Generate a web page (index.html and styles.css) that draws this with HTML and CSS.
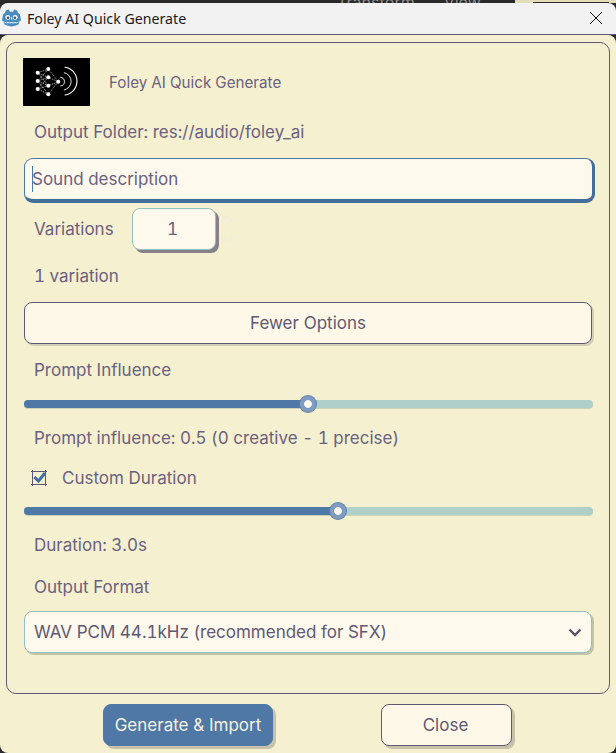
FILE: index.html
```html
<!DOCTYPE html>
<html lang="en">
<head>
<meta charset="utf-8">
<title>Foley AI Quick Generate</title>
<link rel="stylesheet" href="styles.css">
</head>
<body>
<div class="editor-strip">
  <span class="strip-menu">Transform</span><span class="strip-menu">View</span>
  <span class="strip-corner"><span class="strip-line"></span></span>
</div>
<div class="window">
  <header class="titlebar">
    <svg class="app-icon" viewBox="0 0 18 18" width="19" height="19" aria-hidden="true">
      <path d="M3.500 1.500 L6.500 0.500 L7.500 2.500 H10.500 L11.500 0.500 L14.500 1.500 L15 3.500 L17 5 L18 11 L16 12 V14.500 Q9 18.500 2 14.500 V12 L0 11 L1 5 L3 3.500 Z" fill="#478cbf"/>
      <circle cx="5.500" cy="8" r="2.300" fill="#fff"/><circle cx="12.500" cy="8" r="2.300" fill="#fff"/>
      <circle cx="5.800" cy="8.300" r="1.200" fill="#3f4a55"/><circle cx="12.200" cy="8.300" r="1.200" fill="#3f4a55"/>
      <rect x="8.500" y="8" width="1" height="2" fill="#fff"/>
      <path d="M2.500 12.500 Q4.500 13.500 6 12.800 Q7.500 13.800 9 12.800 Q10.500 13.800 12 12.800 Q13.500 13.500 15.500 12.500" stroke="#fff" stroke-width="0.900" fill="none"/>
    </svg>
    <span class="title-text">Foley AI Quick Generate</span>
    <svg class="close-x" viewBox="0 0 12 12" width="12" height="12" aria-hidden="true"><path d="M0 0 L12 12 M12 0 L0 12" stroke="#111" stroke-width="1"/></svg>
  </header>
  <div class="dialog">
    <main class="panel">
      <div class="logo-row">
        <div class="logo">
          <svg viewBox="0 0 67 48" width="67" height="48" aria-hidden="true">
            <g stroke="#fff" stroke-width="0.7" stroke-dasharray="1 1" fill="none">
              <path d="M14.700 14.700 L25.300 11 M14.700 14.700 L25.300 19.300 M14.700 14.700 L25.300 27.700 M14.700 23 L25.300 11 M14.700 23 L25.300 19.300 M14.700 23 L25.300 27.700 M14.700 23 L25.300 36.300 M14.700 31 L25.300 19.300 M14.700 31 L25.300 27.700 M14.700 31 L25.300 36.300 M25.300 11 L35.300 23.700 M25.300 19.300 L35.300 23.700 M25.300 27.700 L35.300 23.700 M25.300 36.300 L35.300 23.700"/>
            </g>
            <g fill="#fff">
              <circle cx="25.300" cy="11" r="2"/><circle cx="14.700" cy="14.700" r="2"/><circle cx="14.700" cy="23" r="2"/><circle cx="14.700" cy="31" r="2"/>
              <circle cx="25.300" cy="19.300" r="2"/><circle cx="25.300" cy="27.700" r="2"/><circle cx="25.300" cy="36.300" r="2"/><circle cx="35.300" cy="23.700" r="2"/>
            </g>
            <g stroke="#fff" fill="none" stroke-linecap="round">
              <path d="M37.700 19.300 A4.400 4.400 0 0 1 37.700 28" stroke-width="0.9"/>
              <path d="M41.300 14.700 A8.900 8.900 0 0 1 41.300 32" stroke-width="0.9"/>
              <path d="M42 9.300 A14 14 0 0 1 42 37" stroke-width="1.100"/>
            </g>
          </svg>
        </div>
        <span class="logo-title">Foley AI Quick Generate</span>
      </div>
      <div class="label folder-label">Output Folder: res://audio/foley_ai</div>
      <div class="field sound-field"><span class="caret"></span><span class="placeholder">Sound description</span></div>
      <div class="variations-row">
        <span class="label-inline">Variations</span>
        <div class="spin-box">1</div>
        <svg class="spin-arrows" viewBox="0 0 14 36" width="14" height="36" aria-hidden="true">
          <path d="M1.500 10.500 L7 5.500 L12.500 10.500" stroke="#eeeedb" stroke-width="2" fill="none"/>
          <path d="M1.500 25.500 L7 30.500 L12.500 25.500" stroke="#eeeedb" stroke-width="2" fill="none"/>
        </svg>
      </div>
      <div class="label variation-count">1 variation</div>
      <button class="btn options-btn" type="button">Fewer Options</button>
      <div class="label influence-label">Prompt Influence</div>
      <div class="slider first-slider">
        <div class="track"><div class="fill fill-half"></div></div>
        <span class="thumb thumb-half"></span>
      </div>
      <div class="label influence-value">Prompt influence: 0.5 (0 creative - 1 precise)</div>
      <div class="check-row">
        <svg class="checkbox" viewBox="0 0 16 16" width="16" height="16" aria-hidden="true">
          <path d="M0 1.500 H16 M1.500 0 V16 M0 14.500 H16 M14.500 0 V16" fill="none" stroke="#5f5773" stroke-width="1"/>
          <path d="M3.300 7 L7.500 11 L14 3" stroke="#3f6f9f" stroke-width="3" fill="none"/>
        </svg>
        <span class="check-label">Custom Duration</span>
      </div>
      <div class="slider second-slider">
        <div class="track"><div class="fill fill-duration"></div></div>
        <span class="thumb thumb-duration"></span>
      </div>
      <div class="label duration-value">Duration: 3.0s</div>
      <div class="label format-label">Output Format</div>
      <div class="select-box">
        <span>WAV PCM 44.1kHz (recommended for SFX)</span>
        <svg class="chevron" viewBox="0 0 14 9" width="14" height="9" aria-hidden="true"><path d="M1.500 1.500 L7 7 L12.500 1.500" stroke="#5a5068" stroke-width="2.400" fill="none"/></svg>
      </div>
    </main>
    <footer class="actions">
      <button class="btn primary" type="button">Generate &amp; Import</button>
      <button class="btn close-btn" type="button">Close</button>
    </footer>
  </div>
</div>
</body>
</html>
```
FILE: styles.css
```css
* { box-sizing: border-box; }
html, body { margin: 0; height: 100%; }
body {
  width: 616px;
  height: 753px;
  overflow: hidden;
  background: #2a2a2a;
  font-family: Inter, "Liberation Sans", sans-serif;
  font-variant-ligatures: none;
  font-feature-settings: "tnum";
  color: #6b6080;
  display: flex;
  flex-direction: column;
}
.editor-strip {
  height: 3px;
  overflow: hidden;
  display: flex;
  gap: 29px;
  padding-left: 337px;
  flex: none;
}
.strip-menu { font-size: 16px; line-height: 4px; color: #8f8f8f; }
.strip-corner {
  margin-left: auto;
  width: 101px;
  height: 3px;
  background: #e2deb8;
  padding: 2px 7px 0 18px;
}
.strip-line { display: block; height: 1px; background: #2a2a2a; }
.window {
  flex: 1;
  display: flex;
  flex-direction: column;
  min-height: 0;
}
.titlebar {
  height: 32px;
  flex: none;
  background: #f3f2f2;
  border-bottom: 1px solid #5f5873;
  border-radius: 8px 8px 0 0;
  display: flex;
  align-items: center;
  padding: 0 14px 1px 2px;
}
.app-icon { flex: none; }
.title-text {
  font-family: "Noto Sans", "Open Sans", sans-serif;
  font-size: 14.200px;
  color: #1a1a1a;
  margin-left: 6px;
  flex: 1;
}
.dialog {
  flex: 1;
  display: flex;
  flex-direction: column;
  padding: 7px 6px 0;
  min-height: 0;
  background: #f5f1d0;
  border-radius: 8px;
}
.panel {
  height: 652px;
  flex: none;
  border: 1px solid #5f5873;
  border-radius: 10px;
  padding: 15px 17px 0 17px;
  display: flex;
  flex-direction: column;
  font-size: 17px;
}
.logo-row { display: flex; align-items: center; height: 48px; margin-left: -1px; }
.logo { width: 67px; height: 48px; background: #000; flex: none; }
.logo svg { display: block; }
.logo-title { font-size: 15.200px; margin-left: 19px; }
.label { line-height: 20px; padding-left: 10px; }
.folder-label { margin-top: 16px; }
.field {
  margin-top: 16px;
  flex: none;
  width: 571px;
  height: 45px;
  background: #fdf9ec;
  border: 1px solid #4c78a8;
  border-bottom: 4px solid #456e9a;
  border-right: 3px solid #456e9a;
  border-radius: 9px;
  display: flex;
  align-items: center;
  padding-left: 7px;
  position: relative;
}
.caret { width: 1px; height: 26px; background: #4c78a8; position: absolute; left: 7px; top: 7px; }
.variations-row { display: flex; align-items: center; margin-top: 5px; height: 42px; flex: none; padding-left: 10px; }
.label-inline { width: 98px; }
.spin-box {
  width: 84px;
  height: 42px;
  padding-right: 3px;
  background: #fdf9ec;
  border: 1px solid #96c0bc;
  border-radius: 8px;
  box-shadow: 3px 3px 0 #86808a;
  display: flex;
  align-items: center;
  justify-content: center;
  font-size: 17px;
}
.spin-arrows { margin-left: 4px; }
.variation-count { margin-top: 16px; }
.btn {
  font-family: inherit;
  font-size: 17px;
  font-variant-ligatures: none;
  color: #5f5873;
  background: #fdf8e8;
  border: 1px solid #5f5873;
  border-radius: 8px;
  box-shadow: 2px 2px 0 #d3cfb6;
  padding: 0;
}
.options-btn { margin-top: 16px; flex: none; height: 42px; width: 568px; }
.influence-label { margin-top: 16px; }
.slider { position: relative; height: 18px; flex: none; }
.first-slider { margin-top: 15px; }
.second-slider { margin-top: 11px; }
.track {
  position: absolute;
  left: 0;
  top: 5px;
  width: 569px;
  height: 8px;
  border-radius: 4px;
  background: #afd0c9;
  overflow: hidden;
  box-shadow: 0 1px 0 #cfd2b2;
}
.fill { height: 100%; background: #4f78a7; }
.fill-half { width: 284px; }
.fill-duration { width: 314px; }
.thumb {
  position: absolute;
  top: 0;
  width: 18px;
  height: 18px;
  border-radius: 50%;
  background: radial-gradient(circle, #fdf9ec 3.500px, #7f9dc2 4.200px);
  border: 1px solid #5b80ac;
  border-bottom-color: #6d7f94;
}
.thumb-half { left: 275px; }
.thumb-duration { left: 305px; }
.influence-value { margin-top: 15px; }
.check-row { display: flex; align-items: center; margin-top: 17px; height: 26px; flex: none; padding-left: 7px; }
.check-label { margin-left: 15px; }
.duration-value { margin-top: 15px; }
.format-label { margin-top: 22px; }
.select-box {
  margin-top: 14px;
  flex: none;
  width: 568px;
  height: 42px;
  background: #fdf9ec;
  border: 1px solid #96c0bc;
  border-radius: 8px;
  box-shadow: 2px 2px 0 #c2c4aa;
  display: flex;
  align-items: center;
  justify-content: space-between;
  padding: 0 9px 0 9px;
  color: #5f5873;
}
.actions {
  display: flex;
  padding-left: 97px;
  gap: 108px;
  margin-top: 10px;
}
.primary {
  width: 170px;
  height: 42px;
  background: #4f78a7;
  border-color: #4f78a7;
  color: #f5f1e0;
  box-shadow: 3px 3px 0 #c6c3aa;
}
.close-btn { width: 131px; height: 42px; padding-right: 2px; box-shadow: 3px 3px 0 #c6c3aa; }
```
